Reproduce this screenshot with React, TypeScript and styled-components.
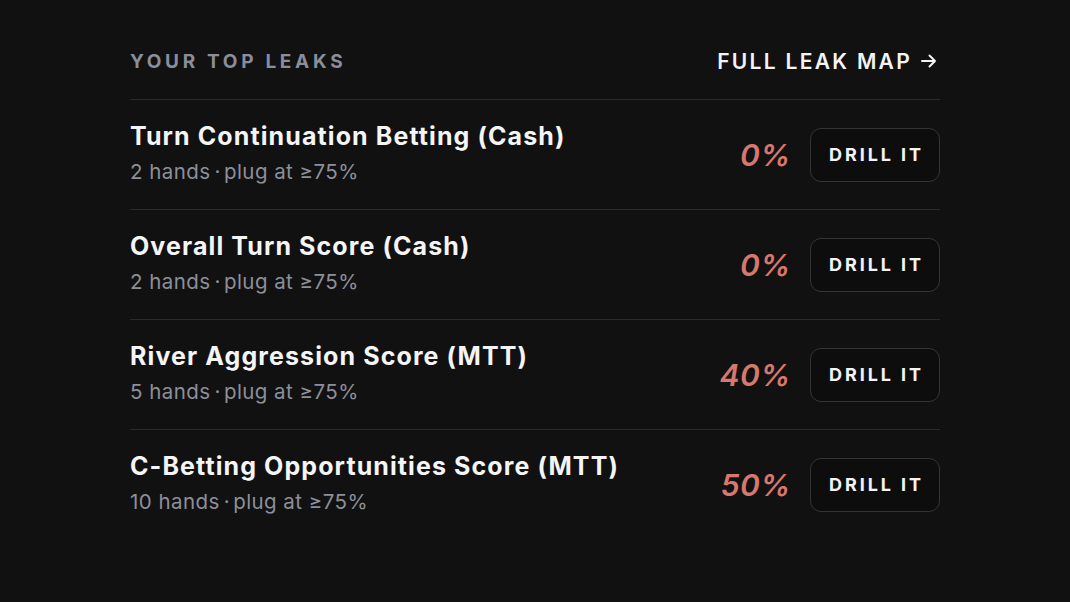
import React from "react";
import styled, { createGlobalStyle } from "styled-components";

const Global = createGlobalStyle`
  html, body {
    margin: 0;
    padding: 0;
    background: #111112;
  }
  body {
    font-family: Inter, "Noto Sans", sans-serif;
    -webkit-font-smoothing: antialiased;
  }
`;

const Page = styled.div`
  width: 1070px;
  height: 602px;
  box-sizing: border-box;
  padding: 40px 130px 0;
  background: #111112;
`;

const Header = styled.div`
  display: flex;
  align-items: center;
  justify-content: space-between;
  height: 42px;
  padding-bottom: 17px;
  border-bottom: 1px solid #2a2a2c;
`;

const SectionTitle = styled.h2`
  margin: 0;
  font-size: 19px;
  font-weight: 700;
  letter-spacing: 3.7px;
  color: #8b8e99;
  text-transform: uppercase;
`;

const MapLink = styled.a`
  display: flex;
  align-items: center;
  gap: 8px;
  font-size: 21px;
  font-weight: 600;
  letter-spacing: 2.3px;
  color: #f4f4f5;
  text-decoration: none;
  margin-right: 2px;
`;

const Row = styled.div<{ $last?: boolean }>`
  display: flex;
  align-items: center;
  justify-content: space-between;
  height: 109px;
  box-sizing: content-box;
  border-bottom: 1px solid ${(p) => (p.$last ? "transparent" : "#2a2a2c")};
`;

const Info = styled.div`
  display: flex;
  flex-direction: column;
  gap: 10px;
  padding: 22px 0 25px;
`;

const LeakName = styled.div`
  font-size: 25px;
  line-height: 28px;
  font-weight: 700;
  color: #f5f5f6;
  letter-spacing: 1.1px;
`;

const Meta = styled.div`
  font-size: 20.5px;
  line-height: 24px;
  font-weight: 400;
  color: #8d8f99;
  letter-spacing: 0.45px;
`;

const Dot = styled.span`
  margin: 0 3px 0 4px;
`;

const Actions = styled.div`
  display: flex;
  align-items: center;
  gap: 19px;
`;

const Score = styled.div`
  font-size: 30px;
  font-weight: 600;
  font-style: italic;
  letter-spacing: 0.5px;
  color: #d8776b;
`;

const DrillButton = styled.button`
  width: 130px;
  height: 54px;
  border-radius: 11px;
  border: 1px solid #343436;
  background: #0d0d0e;
  color: #f4f4f5;
  font-family: inherit;
  font-size: 18px;
  font-weight: 700;
  letter-spacing: 2.9px;
  padding: 0 0 0 3px;
  cursor: pointer;
`;

const leaks = [
  { name: "Turn Continuation Betting (Cash)", hands: 2, score: 0 },
  { name: "Overall Turn Score (Cash)", hands: 2, score: 0 },
  { name: "River Aggression Score (MTT)", hands: 5, score: 40 },
  { name: "C-Betting Opportunities Score (MTT)", hands: 10, score: 50 },
];

export default function App() {
  return (
    <>
      <Global />
      <Page>
        <Header>
          <SectionTitle>Your top leaks</SectionTitle>
          <MapLink href="#">
            FULL LEAK MAP
            <svg width="18" height="16" viewBox="0 0 18 16" fill="none">
              <path d="M2 8h13M9.5 2.5 15 8l-5.5 5.5" stroke="#f4f4f5" strokeWidth="2" strokeLinecap="round" strokeLinejoin="round" />
            </svg>
          </MapLink>
        </Header>
        {leaks.map((l, i) => (
          <Row key={l.name} $last={i === leaks.length - 1}>
            <Info>
              <LeakName>{l.name}</LeakName>
              <Meta>
                {l.hands} hands<Dot>·</Dot>plug at ≥75%
              </Meta>
            </Info>
            <Actions>
              <Score>{l.score}%</Score>
              <DrillButton>DRILL IT</DrillButton>
            </Actions>
          </Row>
        ))}
      </Page>
    </>
  );
}
